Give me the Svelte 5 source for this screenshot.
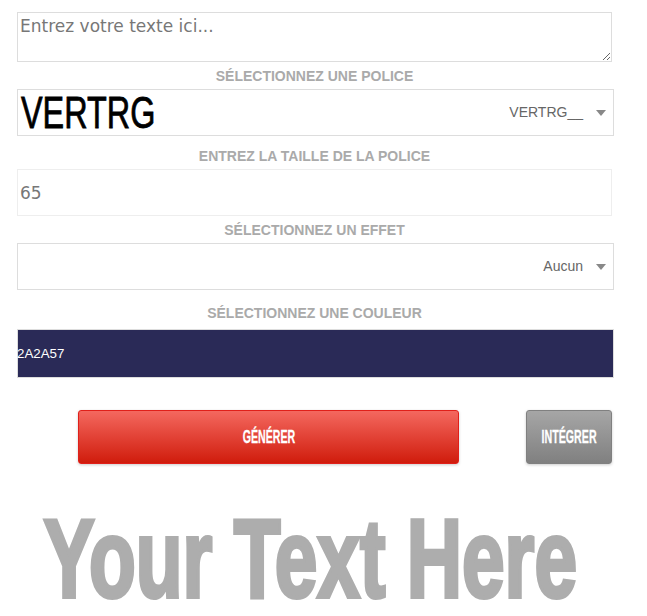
<script>
  let text = $state('');
  let size = $state('65');
  const colour = '2A2A57';
</script>

<div class="form">
  <textarea class="textBox" placeholder="Entrez votre texte ici..." bind:value={text}></textarea>

  <div class="styleLabel fontLabel">SÉLECTIONNEZ UNE POLICE</div>
  <div class="pick">
    <span class="fontSample">VERTRG</span>
    <span class="pickValue">VERTRG__</span>
    <span class="arrow"></span>
  </div>

  <div class="styleLabel sizeLabel">ENTREZ LA TAILLE DE LA POLICE</div>
  <input class="sizeBox" type="text" bind:value={size} />

  <div class="styleLabel effectLabel">SÉLECTIONNEZ UN EFFET</div>
  <div class="pick">
    <span class="pickValue">Aucun</span>
    <span class="arrow"></span>
  </div>

  <div class="styleLabel colourLabel">SÉLECTIONNEZ UNE COULEUR</div>
  <div class="colourBox">{colour}</div>

  <div class="buttonRow">
    <button class="btn red"><span>GÉNÉRER</span></button>
    <button class="btn grey"><span>INTÉGRER</span></button>
  </div>

  <svg class="preview" width="595" height="116" viewBox="0 0 850 116" preserveAspectRatio="none">
    <text x="38" y="98" textLength="762" lengthAdjust="spacingAndGlyphs">Your Text Here</text>
  </svg>
</div>

<style>
  :global(body) {
    background: #fff;
    overflow: hidden;
  }

  .form {
    display: flex;
    flex-direction: column;
    align-items: flex-start;
    width: 597px;
    padding: 12px 0 0 17px;
    font-family: "Liberation Sans", Arial, sans-serif;
  }

  .textBox {
    display: block;
    box-sizing: border-box;
    width: 595px;
    height: 50px;
    margin: 0;
    padding: 3px 2px;
    border: 1px solid #ddd;
    outline: none;
    font-family: "DejaVu Sans", Verdana, sans-serif;
    font-size: 17px;
    line-height: 20px;
    color: #777;
  }

  .textBox::placeholder {
    color: #777;
    opacity: 1;
  }

  .styleLabel {
    width: 595px;
    text-align: center;
    font-size: 14px;
    font-weight: bold;
    line-height: 16px;
    color: #aaa;
  }

  .fontLabel { margin: 6px 0 5px; }
  .sizeLabel { margin: 12px 0 5px; }
  .effectLabel { margin: 6px 0 5px; }
  .colourLabel { margin: 15px 0 8px; }

  .pick {
    display: flex;
    align-items: center;
    box-sizing: border-box;
    width: 597px;
    height: 47px;
    padding: 0 7px 0 3px;
    border: 1px solid #ddd;
  }

  .fontSample {
    width: 140px;
    font-size: 45px;
    line-height: 45px;
    color: #000;
    white-space: nowrap;
    -webkit-text-stroke: 0.8px #000;
    transform: scaleX(0.72);
    transform-origin: left center;
  }

  .pickValue {
    margin-left: auto;
    margin-right: 13px;
    padding-bottom: 2px;
    font-size: 14px;
    color: #666;
  }

  .arrow {
    width: 0;
    height: 0;
    border-left: 5.5px solid transparent;
    border-right: 5.5px solid transparent;
    border-top: 6px solid #888;
  }

  .sizeBox {
    box-sizing: border-box;
    width: 595px;
    height: 47px;
    margin: 0;
    padding: 0 2px;
    border: 1px solid #eee;
    outline: none;
    font-family: "DejaVu Sans", Verdana, sans-serif;
    font-size: 17px;
    color: #777;
  }

  .colourBox {
    box-sizing: border-box;
    width: 597px;
    height: 49px;
    border: 1px solid #ddd;
    background: #2a2a57;
    color: #fff;
    font-size: 13.33px;
    line-height: 47px;
    text-indent: -1px;
  }

  .buttonRow {
    display: flex;
    align-items: flex-start;
    gap: 67px;
    margin: 32px 0 0 61px;
  }

  .btn {
    height: 54px;
    padding: 0;
    border-radius: 3px;
    font-family: "Liberation Sans", sans-serif;
    font-size: 19px;
    font-weight: bold;
    color: #fff;
    box-shadow: 0 1px 3px rgba(0, 0, 0, 0.2);
    cursor: pointer;
    overflow: hidden;
  }

  .btn span {
    display: inline-block;
    margin: 0 -30px;
    -webkit-text-stroke: 0.3px #fff;
    transform: scaleX(0.56);
  }

  .red {
    width: 381px;
    border: 1px solid #e0201a;
    background: linear-gradient(#f4685f, #d01c0c);
  }

  .grey {
    width: 86px;
    border: 1px solid #808080;
    background: linear-gradient(#a6a6a6, #808080);
  }

  .preview {
    display: block;
    margin-top: 35px;
  }

  .preview text {
    font-size: 111px;
    font-weight: bold;
    fill: #adadad;
    stroke: #adadad;
    stroke-width: 4px;
  }
</style>
